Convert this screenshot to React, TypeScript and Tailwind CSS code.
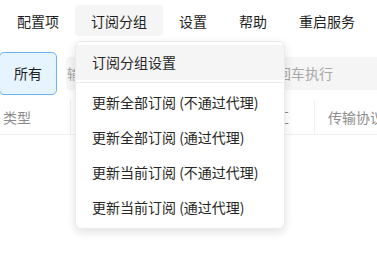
import React from "react";

const navItems = ["配置项", "订阅分组", "设置", "帮助", "重启服务"];

const menuItems = [
  "更新全部订阅 (不通过代理)",
  "更新全部订阅 (通过代理)",
  "更新当前订阅 (不通过代理)",
  "更新当前订阅 (通过代理)",
];

export default function App() {
  return (
    <div
      className="relative h-[270px] w-[377px] overflow-hidden bg-white text-[14px] text-[#1f1f1f]"
      style={{ fontFamily: '"Noto Sans CJK SC", "Noto Sans", sans-serif' }}
    >
      {/* Top menu */}
      <div className="flex h-[41px] items-start pl-px pt-[5px]">
        {navItems.map((item) => (
          <div
            key={item}
            className={`flex h-[31px] items-center rounded px-4 leading-none ${
              item === "订阅分组" ? "bg-[#f5f5f5]" : ""
            }`}
          >
            {item}
          </div>
        ))}
      </div>

      {/* Filter row */}
      <div className="mt-[11px] flex items-center gap-[9px]">
        <div className="-ml-px flex h-[43px] w-[58px] shrink-0 items-center justify-center rounded-[5px] border border-[#69b1ff] bg-[#e6f4ff]">
          所有
        </div>
        <div className="flex h-[33px] flex-1 items-center overflow-hidden whitespace-nowrap rounded-l bg-[#f5f5f5] pl-[1px] text-[#a8a8a8]">
          输入关键字进行筛选，支持正则，回车执行
        </div>
      </div>

      {/* Table header */}
      <div className="mt-[5px] flex h-[35px] items-center border-b border-[#f0f0f0] text-[#8c8c8c]">
        <div className="flex h-full w-[71px] shrink-0 items-center border-r border-[#f0f0f0] pl-[3px]">类型</div>
        <div className="flex h-full w-[244px] shrink-0 items-center justify-end border-r border-[#f0f0f0] pr-[25px]">订阅地址汇</div>
        <div className="flex h-full min-w-0 flex-1 items-center whitespace-nowrap pl-[13px]">传输协议</div>
      </div>

      {/* Dropdown */}
      <div className="absolute left-[75px] top-[41px] w-[210px] rounded-md border border-[#ebebeb] bg-white py-[3px] shadow-[0_3px_10px_rgba(0,0,0,0.12)]">
        <div className="flex h-[35px] items-center bg-[#f5f5f5] pl-4 text-[#262626]">订阅分组设置</div>
        <div className="my-[2px] h-px bg-[#ebebeb]" />
        {menuItems.map((item) => (
          <div key={item} className="flex h-[35px] items-center pl-4 text-[#262626]">
            {item}
          </div>
        ))}
      </div>
    </div>
  );
}
